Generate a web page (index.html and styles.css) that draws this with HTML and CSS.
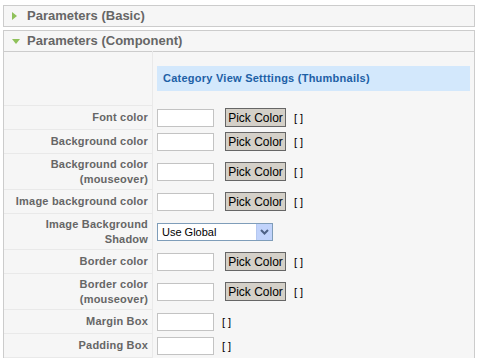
FILE: index.html
```html
<!DOCTYPE html>
<html>
<head>
    <title>Parameters</title>
    <link rel="stylesheet" href="styles.css">
</head>
<body>
    <div class="panel">
        <h3 class="panel-title closed"><span class="arrow"></span>Parameters (Basic)</h3>
    </div>

    <div class="panel">
        <h3 class="panel-title open"><span class="arrow"></span>Parameters (Component)</h3>
        <table class="paramlist">
            <tr class="section">
                <td class="key"></td>
                <td class="value"><div class="section-title">Category View Setttings (Thumbnails)</div></td>
            </tr>
            <tr>
                <td class="key">Font color</td>
                <td class="value"><input type="text" class="text"><button class="pick">Pick Color</button><span class="code">[ ]</span></td>
            </tr>
            <tr>
                <td class="key">Background color</td>
                <td class="value"><input type="text" class="text"><button class="pick">Pick Color</button><span class="code">[ ]</span></td>
            </tr>
            <tr class="tall">
                <td class="key">Background color<br>(mouseover)</td>
                <td class="value"><input type="text" class="text"><button class="pick">Pick Color</button><span class="code">[ ]</span></td>
            </tr>
            <tr>
                <td class="key">Image background color</td>
                <td class="value"><input type="text" class="text"><button class="pick">Pick Color</button><span class="code">[ ]</span></td>
            </tr>
            <tr class="tall">
                <td class="key">Image Background<br>Shadow</td>
                <td class="value">
                    <div class="select">
                        <span>Use Global</span>
                        <span class="drop">
                            <svg width="9" height="6" viewBox="0 0 9 6"><path d="M1 1 L4.5 4.5 L8 1" fill="none" stroke="#4d6185" stroke-width="2"/></svg>
                        </span>
                    </div>
                </td>
            </tr>
            <tr>
                <td class="key">Border color</td>
                <td class="value"><input type="text" class="text"><button class="pick">Pick Color</button><span class="code">[ ]</span></td>
            </tr>
            <tr class="tall">
                <td class="key">Border color<br>(mouseover)</td>
                <td class="value"><input type="text" class="text"><button class="pick">Pick Color</button><span class="code">[ ]</span></td>
            </tr>
            <tr>
                <td class="key">Margin Box</td>
                <td class="value"><input type="text" class="text"><span class="code">[ ]</span></td>
            </tr>
            <tr>
                <td class="key">Padding Box</td>
                <td class="value"><input type="text" class="text"><span class="code">[ ]</span></td>
            </tr>
        </table>
    </div>
</body>
</html>
```

FILE: styles.css
```css
body {
    margin: 0;
    padding: 5px 3px 0 3px;
    background-color: #fff;
    font-family: "Liberation Sans", Arial, sans-serif;
    font-size: 11px;
    color: #333;
}
.panel {
    border: 1px solid #ccc;
    background-color: #f6f6f6;
    margin-bottom: 3px;
}
.panel-title {
    margin: 0;
    height: 20px;
    line-height: 20px;
    padding-left: 23px;
    font-size: 13px;
    font-weight: bold;
    color: #666;
    position: relative;
}
.panel .paramlist {
    border-top: 1px solid #ccc;
}
.arrow {
    position: absolute;
    width: 0;
    height: 0;
}
.closed .arrow {
    left: 8px;
    top: 6px;
    border-top: 4px solid transparent;
    border-bottom: 4px solid transparent;
    border-left: 5px solid #8fc15a;
}
.open .arrow {
    left: 8px;
    top: 8px;
    border-left: 4px solid transparent;
    border-right: 4px solid transparent;
    border-top: 5px solid #8fc15a;
}
.paramlist {
    width: 100%;
    border-collapse: collapse;
}
.paramlist td {
    padding: 0;
}
.key {
    width: 144px;
    height: 23px;
    padding-right: 4px !important;
    text-align: right;
    font-weight: bold;
    color: #666;
    line-height: 15px;
    letter-spacing: 0.2px;
    border-bottom: 1px solid #e9e9e9;
    border-right: 1px solid #e9e9e9;
}
.tall .key {
    height: 35px;
}
.section .key {
    height: 53px;
}
.value {
    padding-left: 4px !important;
    padding-right: 4px !important;
    white-space: nowrap;
}
.section-title {
    background-color: #d3e8fc;
    color: #1d60a6;
    font-weight: bold;
    letter-spacing: 0.25px;
    height: 25px;
    line-height: 25px;
    padding-left: 6px;
}
.text {
    box-sizing: border-box;
    width: 57px;
    height: 18px;
    margin: 0;
    padding: 0 2px;
    border: 1px solid #c3c3c3;
    background-color: #fff;
    vertical-align: middle;
}
.pick {
    box-sizing: border-box;
    width: 61px;
    height: 19px;
    margin: 0 0 0 11px;
    padding: 0;
    background-color: #d4d0c8;
    border: 1px solid #666;
    font-family: "Liberation Sans", Arial, sans-serif;
    font-size: 12px;
    color: #000;
    vertical-align: middle;
}
.code {
    margin-left: 8px;
    font-size: 11px;
    color: #000;
    vertical-align: middle;
}
.text + .code {
    margin-left: 8px;
}
.select {
    box-sizing: border-box;
    display: inline-flex;
    align-items: center;
    justify-content: space-between;
    width: 116px;
    height: 18px;
    border: 1px solid #7f9db9;
    background-color: #fff;
    padding-left: 4px;
    font-size: 11px;
    color: #000;
    vertical-align: middle;
}
.drop {
    display: flex;
    align-items: center;
    justify-content: center;
    width: 15px;
    height: 16px;
    background-color: #c1d3fb;
    border-left: 1px solid #b5c8f0;
}
```
